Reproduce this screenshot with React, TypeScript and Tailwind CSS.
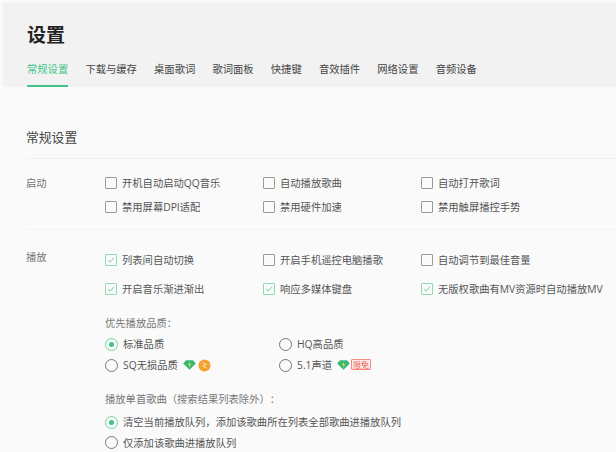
import React from 'react';

const FONT = { fontFamily: '"Open Sans", "Noto Sans CJK SC", sans-serif' };

const tabs = ['常规设置', '下载与缓存', '桌面歌词', '歌词面板', '快捷键', '音效插件', '网络设置', '音频设备'];

const Check: React.FC<{ label: string; on?: boolean }> = ({ label, on }) => (
  <div className="flex items-center gap-[5px] whitespace-nowrap">
    <span className={`flex h-[12px] w-[12px] shrink-0 items-center justify-center border ${on ? 'border-[#8fdcb4]' : 'border-[#9a9a9a]'} rounded-[1px]`}>
      {on && (
        <svg width="8" height="8" viewBox="0 0 8 8" fill="none">
          <path d="M1 4.2 3.2 6.2 7 1.8" stroke="#5fce94" strokeWidth="0.9" />
        </svg>
      )}
    </span>
    <span className="text-[10.3px] leading-[14px] text-[#555]">{label}</span>
  </div>
);

const Radio: React.FC<{ label: string; on?: boolean; children?: React.ReactNode }> = ({ label, on, children }) => (
  <div className="flex items-center gap-[5px] whitespace-nowrap">
    <span className={`flex h-[13px] w-[13px] shrink-0 items-center justify-center rounded-full border ${on ? 'border-[#6fd6a0]' : 'border-[#777]'}`}>
      {on && <span className="h-[5px] w-[5px] rounded-full bg-[#3fc483]" />}
    </span>
    <span className="text-[10.3px] leading-[14px] text-[#555]">{label}</span>
    {children}
  </div>
);

const Diamond = () => (
  <svg width="13" height="10" viewBox="0 0 13 10">
    <path d="M3 .3h7L12.8 3.6 6.5 9.8.2 3.6Z" fill="#35b877" />
    <path d="M7.2 1.8 5 5h1.6L5.8 8 8.4 4.2H6.8Z" fill="#f5e23c" />
  </svg>
);

const Coin = () => (
  <svg width="13" height="13" viewBox="0 0 13 13" className="-ml-[3px]">
    <circle cx="6.5" cy="6.5" r="6" fill="#f2a12e" />
    <path d="M4.4 3.8 8.4 5.4 4.8 7 8.6 9" fill="none" stroke="#fde3b0" strokeWidth="1" />
  </svg>
);

const Section: React.FC<{ title: string; children: React.ReactNode }> = ({ title, children }) => (
  <div className="flex">
    <div className="w-[79px] shrink-0 text-[10.3px] leading-[14px] text-[#777]">{title}</div>
    <div className="min-w-0 flex-1">{children}</div>
  </div>
);

export default function App() {
  return (
    <div style={FONT} className="h-[452px] w-[616px] overflow-hidden bg-[#fafafa] pl-[3px] pt-[3px] [text-spacing-trim:space-all]">
      <div className="h-[84px] bg-[#f2f2f2] pl-[24px]">
        <h1 className="pt-[20px] text-[19px] font-bold leading-[24px] text-[#222]">设置</h1>
        <div className="mt-[14px] flex gap-[17.2px]">
          {tabs.map((t, i) => (
            <div key={t} className={`h-[26px] text-[10.3px] leading-[16px] ${i === 0 ? 'border-b-2 border-[#3fc483] text-[#3fc483]' : 'text-[#444]'}`}>
              {t}
            </div>
          ))}
        </div>
      </div>

      <div className="pl-[23px]">
        <h2 className="pt-[41px] text-[12.8px] leading-[18px] text-[#444]">常规设置</h2>
        <div className="mt-[12px] h-px bg-[#f0f0f0]" />

        <div className="pt-[17px]">
          <Section title="启动">
            <div className="grid grid-cols-[158px_158px_158px] gap-y-[10px]">
              <Check label="开机自动启动QQ音乐" />
              <Check label="自动播放歌曲" />
              <Check label="自动打开歌词" />
              <Check label="禁用屏幕DPI适配" />
              <Check label="禁用硬件加速" />
              <Check label="禁用触屏播控手势" />
            </div>
          </Section>
        </div>
        <div className="mt-[15px] h-px bg-[#f2f2f2]" />

        <div className="pt-[20px]">
          <Section title="播放">
            <div className="grid grid-cols-[158px_158px_158px] gap-y-[15px] pt-[3px]">
              <Check on label="列表间自动切换" />
              <Check label="开启手机遥控电脑播歌" />
              <Check label="自动调节到最佳音量" />
              <Check on label="开启音乐渐进渐出" />
              <Check on label="响应多媒体键盘" />
              <Check on label="无版权歌曲有MV资源时自动播放MV" />
            </div>

            <div className="pt-[20px] text-[10.3px] leading-[14px] text-[#777]">优先播放品质：</div>
            <div className="grid grid-cols-[174px_174px] gap-y-[7px] pt-[7px]">
              <Radio on label="标准品质" />
              <Radio label="HQ高品质" />
              <Radio label="SQ无损品质">
                <Diamond />
                <Coin />
              </Radio>
              <Radio label="5.1声道">
                <Diamond />
                <span className="-ml-[4px] -mt-[1px] rounded-[1px] border border-[#f58a7c] bg-[#fdecea] px-[1px] text-[8px] leading-[9px] text-[#ef5b4c]">限免</span>
              </Radio>
            </div>

            <div className="pt-[20px] text-[10.3px] leading-[14px] text-[#777]">播放单首歌曲（搜索结果列表除外）：</div>
            <div className="flex flex-col gap-[6.5px] pt-[9px]">
              <Radio on label="清空当前播放队列，添加该歌曲所在列表全部歌曲进播放队列" />
              <Radio label="仅添加该歌曲进播放队列" />
            </div>
          </Section>
        </div>
      </div>
    </div>
  );
}
